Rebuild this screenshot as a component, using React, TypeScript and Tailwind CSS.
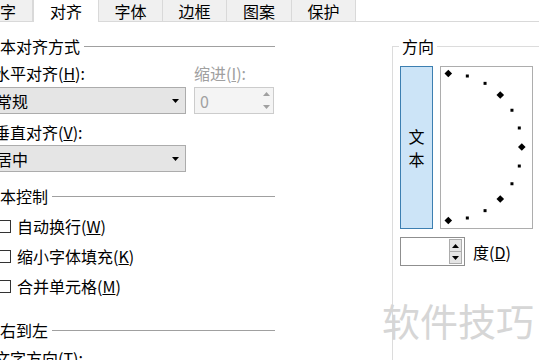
import React from "react";

const Tri = ({ dir, color }: { dir: "up" | "down"; color: string }) => (
    <svg width="7" height="4" viewBox="0 0 7 4">
        <path d={dir === "up" ? "M3.5 0L7 4H0z" : "M0 0h7L3.5 4z"} fill={color} />
    </svg>
);

const Dial = () => {
    const cx = 7.3;
    const cy = 80;
    const r = 73.5;
    const pts = Array.from({ length: 13 }, (_, i) => {
        const a = ((-90 + i * 15) * Math.PI) / 180;
        return { x: cx + r * Math.cos(a), y: cy + r * Math.sin(a), big: i % 3 === 0 };
    });
    return (
        <svg width="91" height="161" viewBox="0 0 91 161">
            {pts.map((p, i) =>
                p.big ? (
                    <polygon
                        key={i}
                        points={`${p.x},${p.y - 3.8} ${p.x + 3.8},${p.y} ${p.x},${p.y + 3.8} ${p.x - 3.8},${p.y}`}
                        fill="#000"
                    />
                ) : (
                    <rect key={i} x={p.x - 1.5} y={p.y - 1.5} width="3" height="3" fill="#000" />
                )
            )}
        </svg>
    );
};

const Tab = ({ label, w, active }: { label: string; w: string; active?: boolean }) => (
    <div
        className={
            active
                ? `${w} h-[22px] shrink-0 bg-white border-x border-[#d9d9d9] relative z-10 flex items-center justify-center`
                : `${w} h-[21px] shrink-0 bg-[#f0f0f0] border-r border-[#d9d9d9] flex items-center justify-center`
        }
    >
        {label}
    </div>
);

const Header = ({ text, top }: { text: string; top: string }) => (
    <div className={`flex items-center h-[16px] ${top}`}>
        <span className="-ml-[16px] shrink-0">{text}</span>
        <div className="ml-[4px] flex-1 h-px bg-[#a0a0a0]" />
    </div>
);

const Check = ({ children, top }: { children: React.ReactNode; top: string }) => (
    <div className={`flex items-center h-[16px] ${top}`}>
        <div className="-ml-[2px] w-[13px] h-[13px] shrink-0 border border-[#333] bg-white" />
        <span className="ml-[6px]">{children}</span>
    </div>
);

const Select = ({ value }: { value: string }) => (
    <div className="h-[27px] bg-[#e5e5e5] border border-[#acacac] flex items-center justify-between pl-[5px] pr-[6px]">
        <span>{value}</span>
        <Tri dir="down" color="#000" />
    </div>
);

export default function App() {
    return (
        <div className="w-[539px] h-[360px] overflow-hidden bg-white relative text-[16px] leading-[16px] text-black font-['Noto_Sans_CJK_SC','Microsoft_YaHei',sans-serif]">
            {/* tabs */}
            <div className="flex h-[22px] border-b border-[#d9d9d9]">
                <div className="-ml-[32px] flex">
                    <Tab label="文字" w="w-[65px]" />
                    <Tab label="对齐" w="w-[66px]" active />
                    <Tab label="字体" w="w-[64px]" />
                    <Tab label="边框" w="w-[64px]" />
                    <Tab label="图案" w="w-[65px]" />
                    <Tab label="保护" w="w-[64px]" />
                </div>
            </div>

            <div className="flex">
                {/* left column */}
                <div className="w-[275px] shrink-0">
                    <Header text="文本对齐方式" top="mt-[16px]" />

                    <div className="flex mt-[11px]">
                        <div className="w-[196px] -ml-[10px] shrink-0">
                            <div className="h-[16px] ml-[4px]">
                                水平对齐(<u>H</u>):
                            </div>
                            <div className="mt-[6px]">
                                <Select value="常规" />
                            </div>
                            <div className="h-[16px] ml-[4px] mt-[10px]">
                                垂直对齐(<u>V</u>):
                            </div>
                            <div className="mt-[5px]">
                                <Select value="居中" />
                            </div>
                        </div>
                        <div className="ml-[8px] w-[80px] shrink-0">
                            <div className="h-[16px] text-[#a0a0a0]">
                                缩进(<u>I</u>):
                            </div>
                            <div className="mt-[6px] h-[27px] bg-[#f4f4f4] border border-[#cccccc] flex items-center justify-between pl-[5px] pr-[3px]">
                                <span className="text-[#a0a0a0]">0</span>
                                <div className="flex flex-col gap-[9px]">
                                    <Tri dir="up" color="#a0a0a0" />
                                    <Tri dir="down" color="#a0a0a0" />
                                </div>
                            </div>
                        </div>
                    </div>

                    <Header text="文本控制" top="mt-[16px]" />
                    <Check top="mt-[14px]">
                        自动换行(<u>W</u>)
                    </Check>
                    <Check top="mt-[14px]">
                        缩小字体填充(<u>K</u>)
                    </Check>
                    <Check top="mt-[14px]">
                        合并单元格(<u>M</u>)
                    </Check>

                    <Header text="从右到左" top="mt-[28px]" />
                    <div className="h-[16px] mt-[12px] -ml-[6px]">
                        文字方向(<u>T</u>):
                    </div>
                </div>

                {/* orientation group */}
                <fieldset className="ml-[117px] mt-[16px] w-[160px] shrink-0 border-l border-t border-[#dcdcdc] pb-[12px]">
                    <legend className="ml-[6px] px-[3px] leading-[16px]">方向</legend>
                    <div className="flex pl-[7px] mt-[12px]">
                        <div className="w-[33px] h-[163px] shrink-0 bg-[#cce4f7] border border-[#3c7fb1] flex flex-col items-center justify-center">
                            <span className="leading-[23px]">文</span>
                            <span className="leading-[23px]">本</span>
                        </div>
                        <div className="ml-[7px] w-[93px] h-[163px] shrink-0 border border-[#adadad] bg-white">
                            <Dial />
                        </div>
                    </div>
                    <div className="flex items-center pl-[7px] mt-[8px]">
                        <div className="w-[65px] h-[29px] shrink-0 border border-[#8f8f8f] bg-white flex justify-end items-center pr-[2px]">
                            <div className="flex flex-col w-[13px] h-[25px]">
                                <div className="flex-1 bg-[#e5e5e5] border border-[#acacac] flex items-center justify-center">
                                    <Tri dir="up" color="#000" />
                                </div>
                                <div className="flex-1 bg-[#e5e5e5] border border-t-0 border-[#acacac] flex items-center justify-center">
                                    <Tri dir="down" color="#000" />
                                </div>
                            </div>
                        </div>
                        <span className="ml-[8px]">
                            度(<u>D</u>)
                        </span>
                    </div>
                </fieldset>
            </div>

            {/* watermark */}
            <div className="absolute left-[382px] top-[301px] text-[38px] leading-[38px] text-[#d6d6d6] tracking-[0px]">
                软件技巧
            </div>
        </div>
    );
}
